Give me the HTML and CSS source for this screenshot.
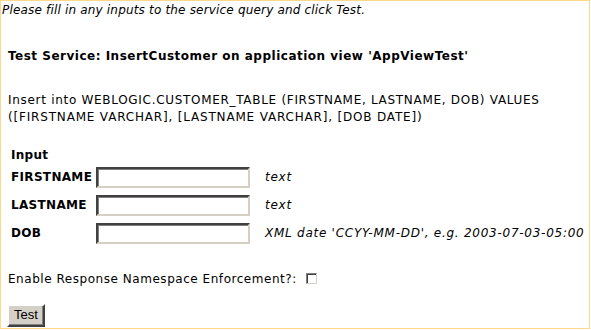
FILE: index.html
```html
<!DOCTYPE html>
<html>
<head>
<meta charset="utf-8">
<link rel="stylesheet" href="styles.css">
</head>
<body>
<div class="frame">
  <p class="intro">Please fill in any inputs to the service query and click Test.</p>
  <p class="title">Test Service: InsertCustomer on application view 'AppViewTest'</p>
  <p class="sql">Insert into WEBLOGIC.CUSTOMER_TABLE (FIRSTNAME, LASTNAME, DOB) VALUES<br><span class="sql2">([FIRSTNAME VARCHAR], [LASTNAME VARCHAR], [DOB DATE])</span></p>
  <div class="inputs">
    <div class="head">Input</div>
    <div class="row">
      <span class="label">FIRSTNAME</span>
      <span class="field"></span>
      <span class="hint">text</span>
    </div>
    <div class="row">
      <span class="label">LASTNAME</span>
      <span class="field"></span>
      <span class="hint">text</span>
    </div>
    <div class="row">
      <span class="label">DOB</span>
      <span class="field"></span>
      <span class="hint">XML date 'CCYY-MM-DD', e.g. 2003-07-03-05:00</span>
    </div>
  </div>
  <p class="ns">Enable Response Namespace Enforcement?: <span class="check"></span></p>
  <div class="actions"><span class="btn">Test</span></div>
</div>
</body>
</html>
```
FILE: styles.css
```css
html, body { margin: 0; padding: 0; background: #fff; }
.frame {
  border: 1px solid #ffd88a;
  width: 588px;
  height: 327px;
  overflow: hidden;
  font-family: "DejaVu Sans", Verdana, sans-serif;
  font-size: 12px;
  color: #000;
}
p { margin: 0; }
.intro { font-style: italic; padding: 2px 0 0 1px; line-height: 15px; letter-spacing: 0.18px; }
.title { font-weight: bold; padding: 30px 0 0 7px; line-height: 16px; letter-spacing: 0.5px; }
.sql { padding: 28px 0 0 7px; line-height: 17px; letter-spacing: 0.7px; }
.sql2 { letter-spacing: 0.82px; }
.inputs { padding: 21px 0 0 10px; }
.head { font-weight: bold; line-height: 16px; height: 16px; letter-spacing: 0.3px; }
.row { display: flex; align-items: center; height: 28px; }
.label { font-weight: bold; width: 85px; letter-spacing: 0.33px; }
.field {
  width: 150px; height: 17px;
  border-style: solid; border-width: 2px;
  border-color: #404040 #d4d0c8 #d4d0c8 #404040;
  box-shadow: inset 1px 1px 0 #808080;
  background: #fff;
}
.hint { font-style: italic; margin-left: 15px; letter-spacing: 0.74px; }
.ns { padding: 24px 0 0 7px; line-height: 16px; display: flex; align-items: center; letter-spacing: 0.54px; }
.check {
  display: inline-block; width: 9px; height: 9px;
  border: 1px solid; border-color: #808080 #d4d0c8 #d4d0c8 #808080;
  box-shadow: inset 1px 1px 0 #404040;
  margin-left: 9px; margin-top: -2px;
}
.actions { padding: 17px 0 0 6px; }
.btn {
  display: inline-block;
  font-family: "Liberation Sans", Arial, sans-serif;
  font-size: 13px;
  background: #d4d0c8;
  border: 2px solid; border-color: #fff #404040 #404040 #fff;
  box-shadow: inset -1px -1px 0 #808080;
  padding: 2px 5px 3px 5px;
  line-height: 14px;
}
```
